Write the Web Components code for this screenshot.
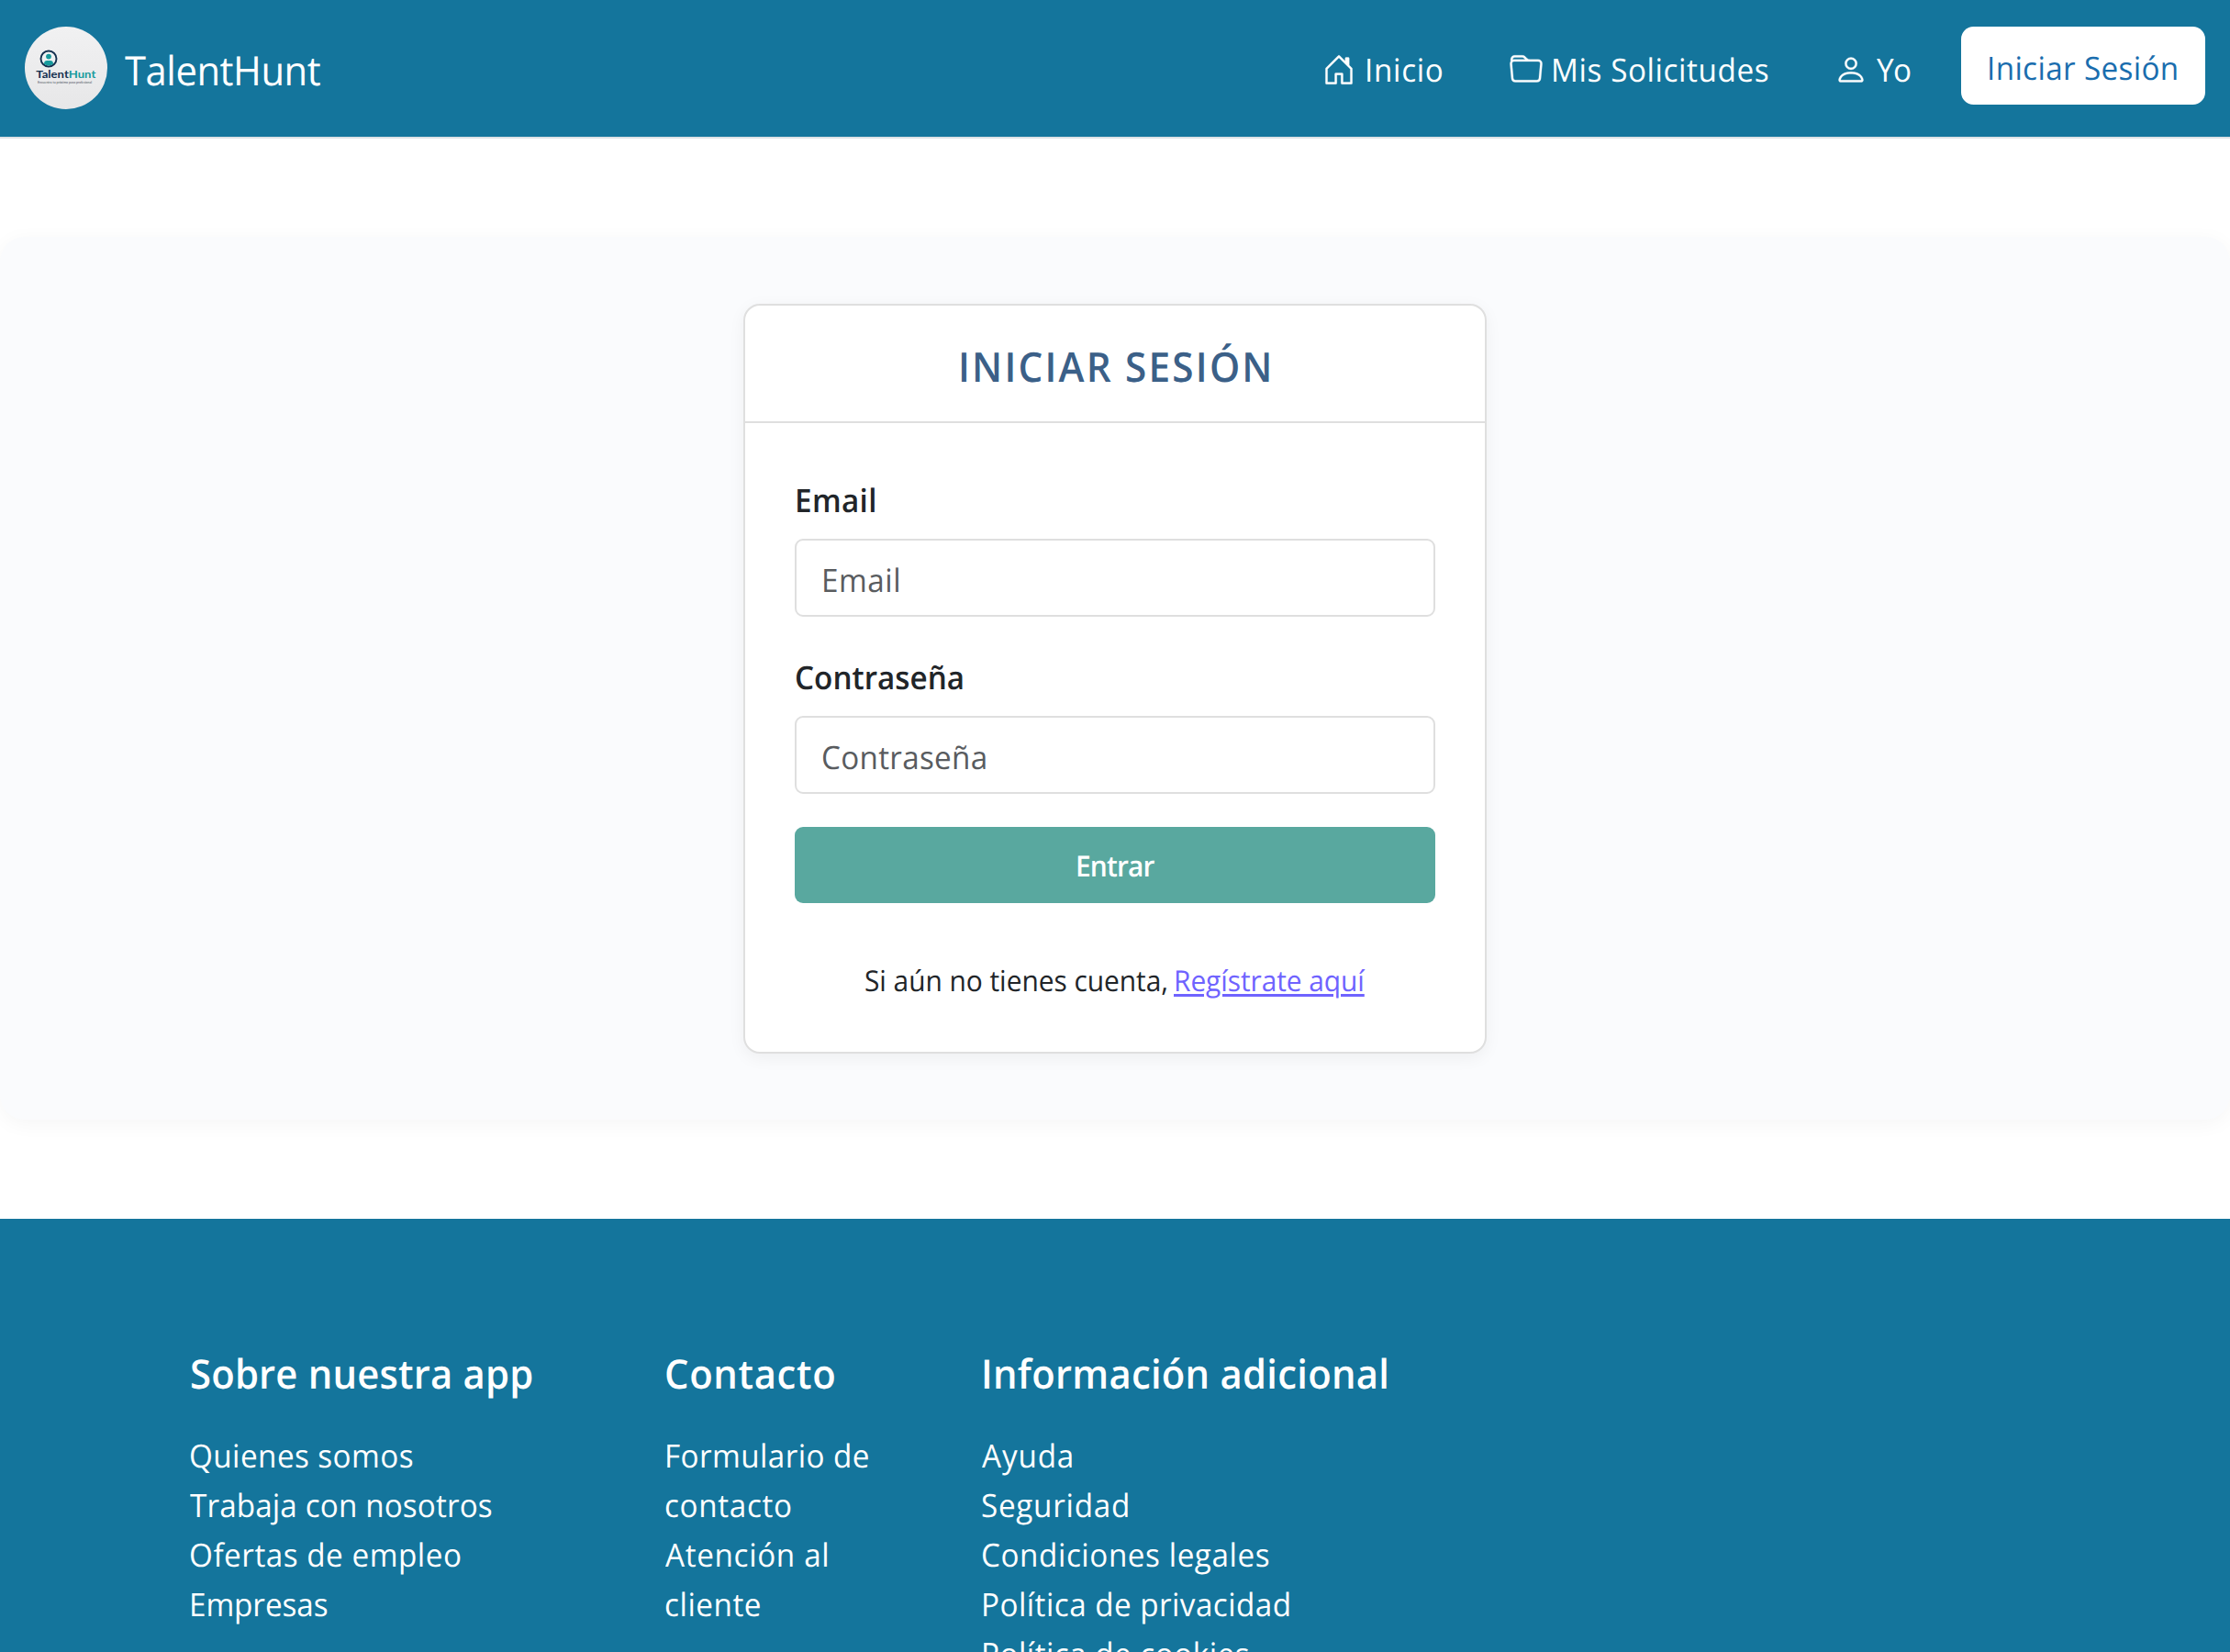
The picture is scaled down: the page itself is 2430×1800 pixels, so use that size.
<!DOCTYPE html>
<html lang="es">
<head>
<meta charset="utf-8">
<title>TalentHunt</title>
<style>
html, body { margin: 0; height: 1800px; overflow: hidden; background: #fff; font-family: "Open Sans", "Noto Sans", sans-serif; color: #212529; }
</style>
</head>
<body>
<th-page></th-page>
<script>
const define = (name, html, after) => {
  const tpl = document.createElement('template');
  tpl.innerHTML = html;
  customElements.define(name, class extends HTMLElement {
    connectedCallback() {
      if (this.shadowRoot) return;
      this.attachShadow({ mode: 'open' }).appendChild(tpl.content.cloneNode(true));
      if (after) after.call(this, this.shadowRoot);
    }
  });
};

/* A line of text, slightly condensed and tracked so that its ink is exactly `w` pixels wide. */
const CONDENSE = 0.95;
const ctx = document.createElement('canvas').getContext('2d');
customElements.define('fit-text', class extends HTMLElement {
  connectedCallback() {
    if (this.shadowRoot) return;
    const text = this.getAttribute('t'), w = +this.getAttribute('w');
    const size = +(this.getAttribute('size') || 35), weight = this.getAttribute('weight') || 400;
    ctx.font = `${weight} ${size}px "Open Sans", "Noto Sans", sans-serif`;
    const m = ctx.measureText(text);
    const ink = m.actualBoundingBoxRight + m.actualBoundingBoxLeft;
    const ls = (w / CONDENSE - ink) / (text.length - 1);
    this.attachShadow({ mode: 'open' }).innerHTML = `<style>
      :host { display: block; flex: none; width: ${w}px; white-space: nowrap; font-size: ${size}px; font-weight: ${weight}; text-rendering: geometricPrecision; }
      span { display: block; width: max-content; margin-left: ${m.actualBoundingBoxLeft * CONDENSE}px; letter-spacing: ${ls}px; transform: scaleX(${CONDENSE}); transform-origin: 0 50%; }
    </style><span></span>`;
    this.shadowRoot.querySelector('span').textContent = text;
  }
});

define('th-logo', `<style>
  :host { display: block; width: 90px; height: 90px; flex: none; }
  svg { display: block; }
</style>
<svg width="90" height="90" viewBox="0 0 90 90">
  <defs><linearGradient id="g" x1="0" y1="0" x2="0" y2="1"><stop offset="0" stop-color="#f1f1f2"/><stop offset="1" stop-color="#e7e7e8"/></linearGradient>
  <clipPath id="c"><circle cx="26" cy="35" r="7.6"/></clipPath></defs>
  <circle cx="45" cy="45" r="45" fill="url(#g)"/>
  <circle cx="26" cy="35" r="8.5" fill="#eef2f3" stroke="#14304f" stroke-width="1.9"/>
  <g clip-path="url(#c)" fill="#179a9c"><circle cx="26" cy="32.6" r="2.9"/><rect x="21" y="37" width="10" height="9" rx="3.4"/></g>
  <text x="12.3" y="56" font-family="Lato, sans-serif" font-weight="700" font-size="12" textLength="65" lengthAdjust="spacingAndGlyphs" fill="#14304f">Talent<tspan fill="#179a9c">Hunt</tspan></text>
  <text x="14" y="61.7" font-family="Lato, sans-serif" font-size="4" textLength="59" lengthAdjust="spacingAndGlyphs" fill="#4a5260">Encuentra tu próximo paso profesional</text>
</svg>`);

const ICONS = {
  house: 'M8.354 1.146a.5.5 0 0 0-.708 0l-6 6A.5.5 0 0 0 1.5 7.5v7a.5.5 0 0 0 .5.5h4.5a.5.5 0 0 0 .5-.5v-4h2v4a.5.5 0 0 0 .5.5H14a.5.5 0 0 0 .5-.5v-7a.5.5 0 0 0-.146-.354L13 5.793V2.5a.5.5 0 0 0-.5-.5h-1a.5.5 0 0 0-.5.5v1.293zM2.5 14V7.707l5.5-5.5 5.5 5.5V14H10v-4a.5.5 0 0 0-.5-.5h-3a.5.5 0 0 0-.5.5v4z',
  folder: 'M.54 3.87.5 3a2 2 0 0 1 2-2h3.672a2 2 0 0 1 1.414.586l.828.828A2 2 0 0 0 9.828 3h3.982a2 2 0 0 1 1.992 2.181l-.637 7A2 2 0 0 1 13.174 14H2.826a2 2 0 0 1-1.991-1.819l-.637-7a2 2 0 0 1 .342-1.31zM2.19 4a1 1 0 0 0-.996 1.09l.637 7a1 1 0 0 0 .995.91h10.348a1 1 0 0 0 .995-.91l.637-7A1 1 0 0 0 13.81 4zm4.69-1.707A1 1 0 0 0 6.172 2H2.5a1 1 0 0 0-1 .981l.006.139q.323-.119.684-.12h5.396z',
  person: 'M8 8a3 3 0 1 0 0-6 3 3 0 0 0 0 6m2-3a2 2 0 1 1-4 0 2 2 0 0 1 4 0m4 8c0 1-1 1-1 1H3s-1 0-1-1 1-4 6-4 6 3 6 4m-1-.004c-.001-.246-.154-.986-.832-1.664C11.516 10.68 10.289 10 8 10s-3.516.68-4.168 1.332c-.678.678-.83 1.418-.832 1.664z'
};
define('nav-item', `<style>
  :host { display: flex; align-items: flex-start; color: #fff; }
  svg { display: block; width: 36px; height: 36px; margin-top: 29px; fill: currentColor; stroke: currentColor; stroke-width: .12; flex: none; overflow: visible; }
  .label { display: block; line-height: 96px; }
</style><svg viewBox="0 0 16 16"><path/></svg><div class="label"><slot></slot></div>`, function (root) {
  root.querySelector('path').setAttribute('d', ICONS[this.getAttribute('icon')]);
  root.querySelector('.label').style.marginLeft = this.getAttribute('gap') + 'px';
});

define('th-header', `<style>
  :host { display: flex; align-items: flex-start; box-sizing: border-box; flex: none; height: 151px; padding: 29px 27px 0; background: #14759c; border-bottom: 2px solid #dee2e6; color: #fff; }
  .brand { margin-left: 19px; line-height: 95px; }
  nav { display: flex; margin-left: auto; align-items: flex-start; }
  .folder { margin-left: 73px; }
  .person { margin-left: 72px; }
  .btn { margin-left: 55px; box-sizing: border-box; width: 266px; height: 85px; padding-left: 31px; border-radius: 13.5px; background: #fff; color: #1a6dae; line-height: 91px; }
</style>
<th-logo></th-logo>
<div class="brand"><fit-text t="TalentHunt" w="213" size="44"></fit-text></div>
<nav>
  <nav-item icon="house" gap="13"><fit-text t="Inicio" w="82"></fit-text></nav-item>
  <nav-item class="folder" icon="folder" gap="12"><fit-text t="Mis Solicitudes" w="234"></fit-text></nav-item>
  <nav-item class="person" icon="person" gap="10"><fit-text t="Yo" w="37"></fit-text></nav-item>
  <div class="btn"><fit-text t="Iniciar Sesión" w="204"></fit-text></div>
</nav>`);

define('form-field', `<style>
  :host { display: block; }
  .label { line-height: 54px; height: 54px; padding-left: 2px; }
  .box { box-sizing: border-box; height: 85px; margin-top: 14px; border: 2px solid #dfdfdf; border-radius: 9px; background: #fff; padding-left: 29px; line-height: 87px; color: #595c5f; }
</style><div class="label"><slot name="label"></slot></div><div class="box"><slot></slot></div>`);

define('login-card', `<style>
  :host { display: block; box-sizing: border-box; width: 810px; height: 817px; border: 2px solid #dfdfdf; border-radius: 18px; background: #fff; box-shadow: 0 4.5px 18px rgba(0,0,0,.05); }
  header { display: flex; justify-content: center; height: 126px; border-bottom: 2px solid #dfdfdf; color: #3b6088; line-height: 133px; }
  .body { padding: 58px 54px 0; }
  form-field + form-field { margin-top: 40px; }
  .submit { display: flex; justify-content: center; height: 83px; margin-top: 36px; border-radius: 9px; background: #59a89f; color: #fff; line-height: 86px; }
  .foot { display: flex; justify-content: flex-start; margin-top: 61px; padding-left: 77px; line-height: 48px; }
  a { display: block; margin-left: 11px; color: #6f63ff; text-decoration: underline; text-decoration-thickness: 3px; text-underline-offset: 3px; }
</style>
<header><fit-text t="INICIAR SESIÓN" w="335" size="44.5" weight="600"></fit-text></header>
<div class="body">
  <form-field><fit-text slot="label" t="Email" w="84" weight="600" style="margin-left:1px"></fit-text><fit-text t="Email" w="81" style="margin-left:1px"></fit-text></form-field>
  <form-field><fit-text slot="label" t="Contraseña" w="181" weight="600"></fit-text><fit-text t="Contraseña" w="177"></fit-text></form-field>
  <div class="submit"><fit-text t="Entrar" w="85" size="31.5" weight="600" style="margin-left:2px"></fit-text></div>
  <div class="foot"><fit-text t="Si aún no tienes cuenta," w="328" size="31.5"></fit-text><a><fit-text t="Regístrate aquí" w="206" size="31.5"></fit-text></a></div>
</div>`);

define('footer-column', `<style>
  :host { display: block; flex: none; }
  .title { line-height: 54px; height: 54px; padding-left: 1px; margin-bottom: 37px; }
  .list { line-height: 54px; }
</style><div class="title"><slot name="title"></slot></div><div class="list"><slot></slot></div>`);

define('th-footer', `<style>
  :host { display: flex; box-sizing: border-box; flex: none; height: 472px; padding: 141px 207px 0 208px; background: #14759c; color: #fff; overflow: hidden; }
  footer-column:nth-of-type(1) { width: 517px; }
  footer-column:nth-of-type(2) { width: 346px; }
</style>
<footer-column><fit-text slot="title" t="Sobre nuestra app" w="371" size="44" weight="600"></fit-text>
  <fit-text t="Quienes somos" w="242"></fit-text><fit-text t="Trabaja con nosotros" w="329" style="margin-left:-1px"></fit-text><fit-text t="Ofertas de empleo" w="294"></fit-text><fit-text t="Empresas" w="148" style="margin-left:1px"></fit-text></footer-column>
<footer-column><fit-text slot="title" t="Contacto" w="183" size="44" weight="600"></fit-text>
  <fit-text t="Formulario de" w="219" style="margin-left:2px"></fit-text><fit-text t="contacto" w="137"></fit-text><fit-text t="Atención al" w="176"></fit-text><fit-text t="cliente" w="103"></fit-text></footer-column>
<footer-column><fit-text slot="title" t="Información adicional" w="438" size="44" weight="600" style="margin-left:1px"></fit-text>
  <fit-text t="Ayuda" w="98" style="margin-left:-1px"></fit-text><fit-text t="Seguridad" w="159" style="margin-left:-1px"></fit-text><fit-text t="Condiciones legales" w="312"></fit-text><fit-text t="Política de privacidad" w="333" style="margin-left:1px"></fit-text><fit-text t="Política de cookies" w="289" style="margin-left:1px"></fit-text></footer-column>`);

define('th-page', `<style>
  :host { display: flex; flex-direction: column; height: 1800px; }
  main { display: flex; justify-content: center; align-items: flex-start; box-sizing: border-box; flex: none; height: 962px; margin: 107px 0 108px; padding-top: 73px; border-radius: 27px; background: #fafbfd; box-shadow: 0 4.5px 22px rgba(0,0,0,.04); }
</style>
<th-header></th-header>
<main><login-card></login-card></main>
<th-footer></th-footer>`);
</script>
</body>
</html>
